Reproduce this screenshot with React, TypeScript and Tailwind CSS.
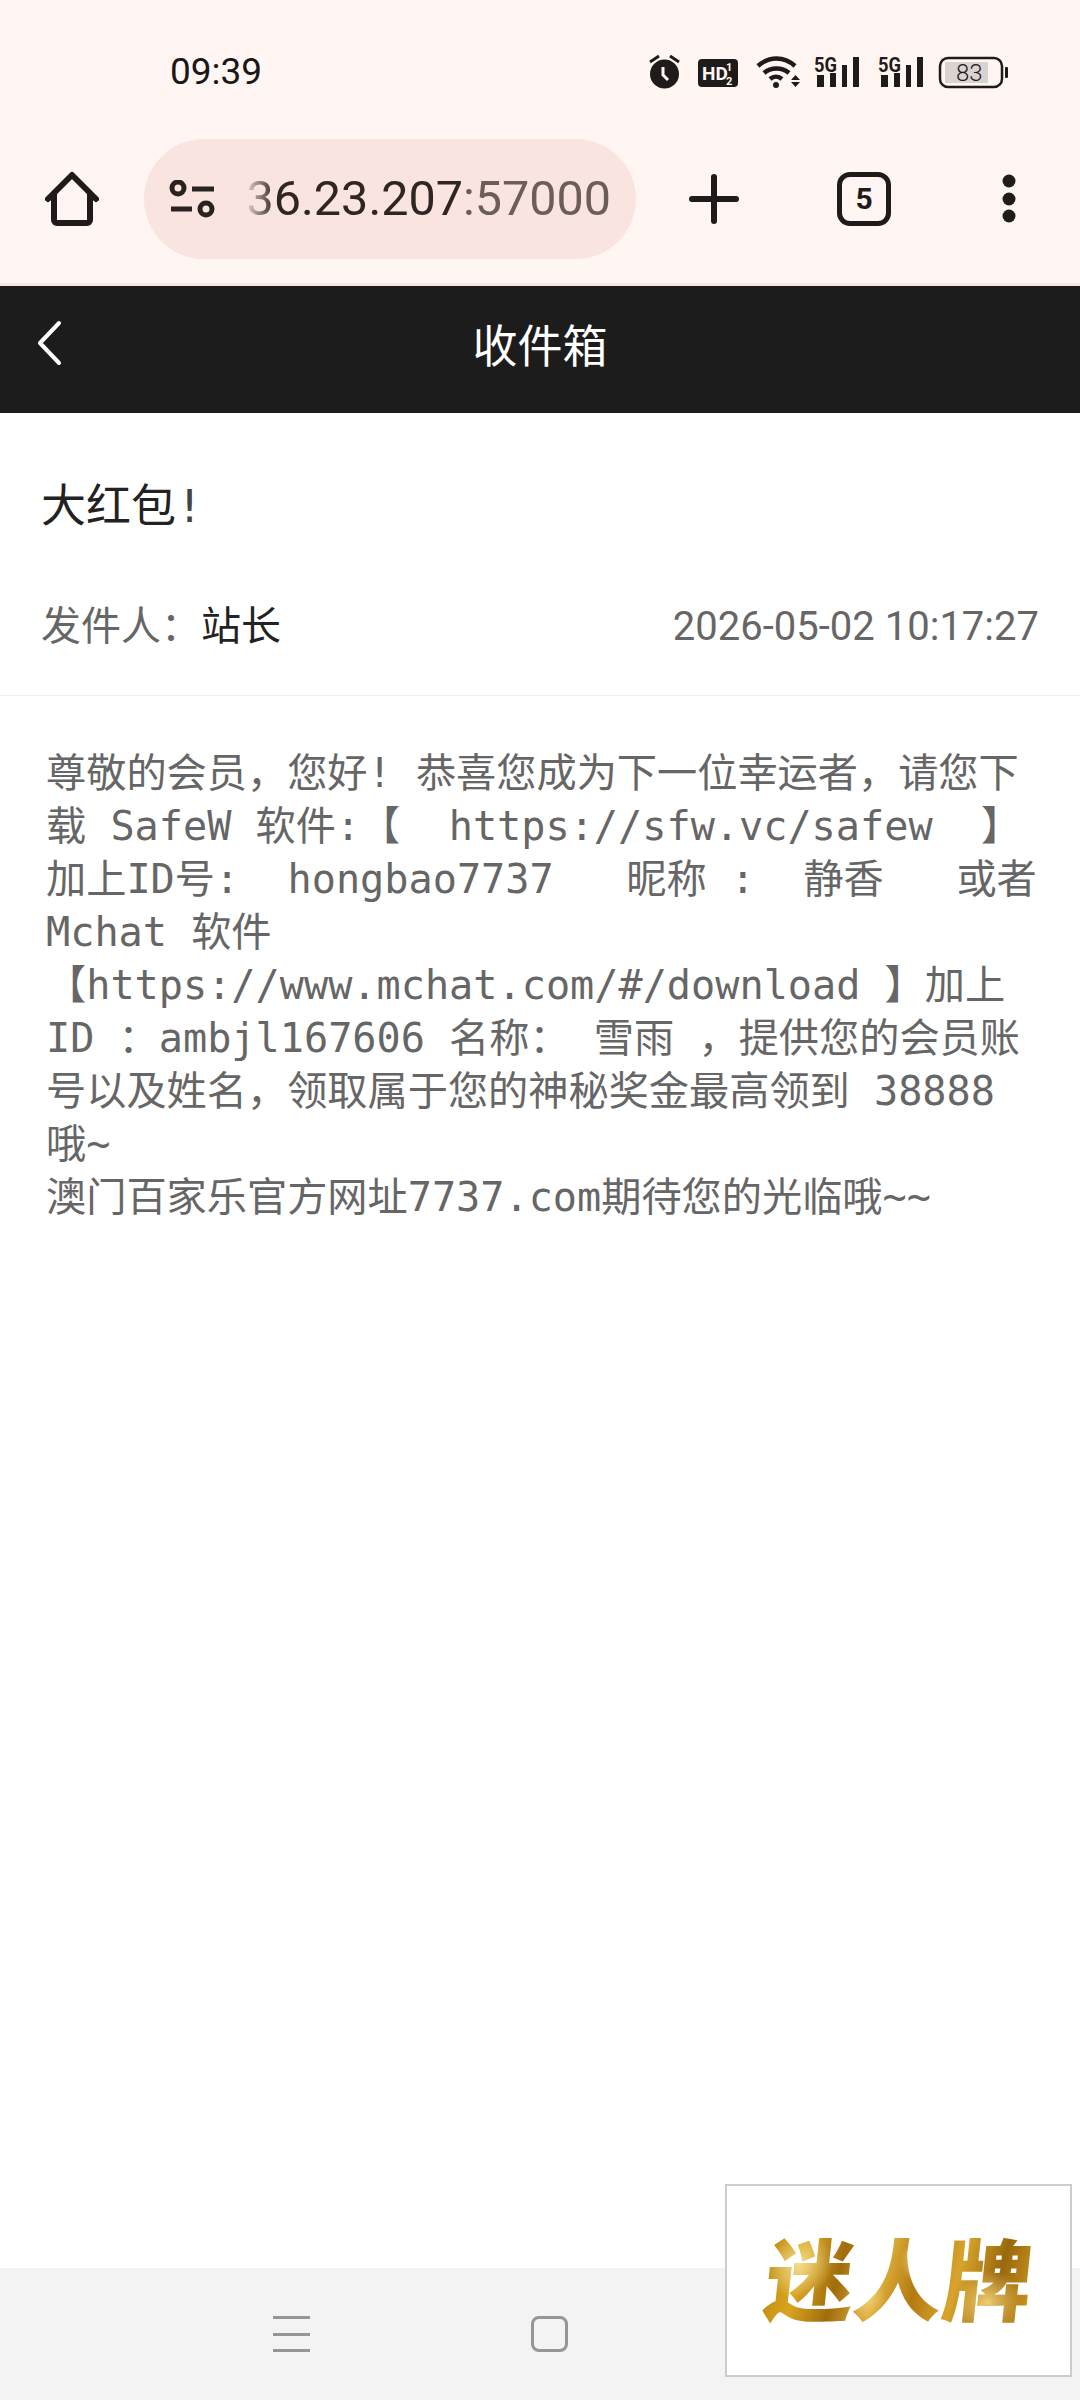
const bodyLines = [
  '尊敬的会员，您好! 恭喜您成为下一位幸运者，请您下',
  '载 SafeW 软件:【  https://sfw.vc/safew  】',
  '加上ID号:  hongbao7737   昵称 :  静香   或者',
  'Mchat 软件',
  '【https://www.mchat.com/#/download 】加上',
  'ID ：ambjl167606 名称： 雪雨 ，提供您的会员账',
  '号以及姓名，领取属于您的神秘奖金最高领到 38888',
  '哦~',
  '澳门百家乐官方网址7737.com期待您的光临哦~~',
];

const FiveG = ({ x }: { x: number }) => (
  <g transform={`translate(${x} 0)`}>
    <text x="166" y="20" fontFamily="Roboto" fontWeight="700" fontSize="21" textLength="23" lengthAdjust="spacingAndGlyphs">5G</text>
    <path d="M169 23h7v12h-7zM182 21h6v14h-6zM194 13h5v22h-5zM205 5h6v30h-6z" />
  </g>
);

const StatusIcons = () => (
  <svg width="362" height="38" viewBox="0 0 362 38" className="text-[#1f1b1a]" fill="currentColor">
    {/* alarm */}
    <path d="M2 10l9-6M22 4l9 6" stroke="currentColor" strokeWidth="3" fill="none" />
    <circle cx="16.5" cy="22" r="14.5" />
    <path d="M15 15v8l5 5" stroke="#fff6f3" strokeWidth="3" fill="none" />
    {/* HD badge */}
    <rect x="50" y="7" width="40" height="28" rx="4" />
    <text x="54" y="28" fontFamily="Roboto" fontWeight="700" fontSize="19" fill="#fff6f3">HD</text>
    <text x="78" y="19" fontFamily="Roboto" fontWeight="700" fontSize="11" fill="#fff6f3">1</text>
    <text x="78" y="33" fontFamily="Roboto" fontWeight="700" fontSize="11" fill="#fff6f3">2</text>
    {/* wifi */}
    <path d="M110 14c11-10 26-10 37 0M116 21c7-6 18-6 25 0M122 27c3.500-3 8.500-3 12 0" stroke="currentColor" strokeWidth="4.500" fill="none" />
    <circle cx="128" cy="33" r="3" />
    <path d="M143 28l4.500-5 4.500 5zM143 30h9l-4.500 5z" />
    <FiveG x={0} />
    <FiveG x={64} />
    {/* battery */}
    <rect x="292" y="6" width="62" height="29" rx="8" fill="none" stroke="currentColor" strokeWidth="2.500" />
    <rect x="297" y="10" width="43" height="21" fill="#d9d4d2" />
    <text x="308" y="29" fontFamily="Roboto" fontWeight="300" fontSize="24">83</text>
    <rect x="357" y="15" width="3" height="11" rx="1" />
  </svg>
);

export default function App() {
  return (
    <div className="relative flex h-[2400px] w-[1080px] flex-col overflow-hidden bg-white font-['Roboto','Noto_Sans_CJK_SC',sans-serif]">
      {/* status bar + browser toolbar */}
      <div className="h-[286px] border-b-[3px] border-[#fae6e0] bg-[#fff6f3]">
        <div className="flex h-[139px] items-start justify-between pl-[170px] pr-[70px] pt-[52px]">
          <span className="text-[37px] leading-[40px] text-[#1a1716]">09:39</span>
          <StatusIcons />
        </div>
        <div className="flex items-center">
          <svg width="58" height="58" viewBox="0 0 58 58" className="ml-[43px]" fill="none" stroke="#1f1b1a" strokeWidth="6" strokeLinecap="round" strokeLinejoin="round">
            <path d="M5 29L29 5l24 24M11 24v26a3 3 0 0 0 3 3h30a3 3 0 0 0 3-3V24" />
          </svg>
          <div className="relative ml-[43px] flex h-[120px] w-[492px] items-center overflow-hidden rounded-full bg-[#f9e4df]">
            <svg width="48" height="38" viewBox="0 0 48 38" className="ml-[25px]" fill="none" stroke="#2a2220" strokeWidth="5">
              <circle cx="9" cy="8" r="6" />
              <path d="M23 9h22M2 29h21" />
              <circle cx="37" cy="29" r="6" />
            </svg>
            <span className="ml-[26px] w-[368px] overflow-hidden whitespace-nowrap text-right text-[48.5px] leading-[56px] text-[#2f2523]">
              36.23.207<span className="text-[#6d5d5a]">:57000</span>
            </span>
            <div className="absolute left-[99px] top-0 h-full w-[32px] bg-gradient-to-r from-[#f9e4df] to-transparent" />
          </div>
          <svg width="50" height="50" viewBox="0 0 50 50" className="ml-[53px]" stroke="#1f1b1a" strokeWidth="6" strokeLinecap="round">
            <path d="M25 3v44M3 25h44" />
          </svg>
          <div className="ml-[98px] flex h-[54px] w-[54px] items-center justify-center rounded-[13px] border-[5px] border-[#1f1b1a] text-[30px] font-bold leading-none text-[#1f1b1a]">
            5
          </div>
          <svg width="16" height="50" viewBox="0 0 16 50" className="ml-[110px]" fill="#1f1b1a">
            <circle cx="8" cy="7" r="6.500" />
            <circle cx="8" cy="25" r="6.500" />
            <circle cx="8" cy="42" r="6.500" />
          </svg>
        </div>
      </div>

      {/* page header */}
      <div className="relative flex h-[127px] items-center justify-center bg-[#1c1c1c] pb-[4px]">
        <svg width="28" height="46" viewBox="0 0 28 46" className="absolute left-[35px] top-[34px]" fill="none" stroke="#fff" strokeWidth="4" strokeLinecap="round" strokeLinejoin="round">
          <path d="M24 3L5 23l19 20" />
        </svg>
        <span className="text-[45px] leading-[60px] text-white">收件箱</span>
      </div>

      {/* message */}
      <div className="border-b border-[#f0f0f0] px-[41px] pb-[40px] pt-[64px]">
        <h1 className="text-[45px] font-normal leading-[60px] text-[#222]">
          大红包<span className="font-['DejaVu_Sans_Mono',monospace] font-light text-[#444]">!</span>
        </h1>
        <div className="mt-[62px] flex items-center justify-between leading-[56px]">
          <div className="text-[40px]">
            <span className="text-[#666]">发件人：</span>
            <span className="text-[#222]">站长</span>
          </div>
          <span className="text-[40px] text-[#666]">2026-05-02 10:17:27</span>
        </div>
      </div>
      <div className="pl-[46px] pt-[51px] font-['DejaVu_Sans_Mono','Noto_Sans_CJK_SC',monospace] text-[40.2px] leading-[53px] text-[#666]">
        {bodyLines.map((line, i) => (
          <div key={i} className="whitespace-pre">{line}</div>
        ))}
      </div>

      {/* system nav bar */}
      <div className="mt-auto flex h-[132px] items-start bg-[#f3f3f3] pt-[48px]">
        <div className="ml-[273px] flex h-[36px] w-[37px] flex-col justify-between">
          <div className="h-[3px] bg-[#969696]" />
          <div className="h-[3px] bg-[#969696]" />
          <div className="h-[3px] bg-[#969696]" />
        </div>
        <div className="ml-[221px] h-[36px] w-[37px] rounded-[8px] border-[3px] border-[#969696]" />
      </div>

      {/* floating logo badge */}
      <div className="absolute left-[725px] top-[2184px] flex h-[193px] w-[347px] items-center justify-center border-2 border-[#cccccc] bg-white pt-[6px]">
        <span className="-skew-x-6 bg-[radial-gradient(circle_at_12%_30%,#f4dc8c_0%,transparent_14%),radial-gradient(circle_at_38%_65%,#f0d27a_0%,transparent_12%),radial-gradient(circle_at_58%_25%,#f6e09a_0%,transparent_13%),radial-gradient(circle_at_84%_70%,#efcf73_0%,transparent_14%),linear-gradient(100deg,#b8860b_0%,#d9a520_14%,#a06c0c_28%,#e0b23c_42%,#b47a12_56%,#d8a42c_70%,#9a680c_85%,#cf9a24_100%)] bg-clip-text text-[89px] font-black leading-[96px] text-transparent">
          迷人牌
        </span>
      </div>
    </div>
  );
}
